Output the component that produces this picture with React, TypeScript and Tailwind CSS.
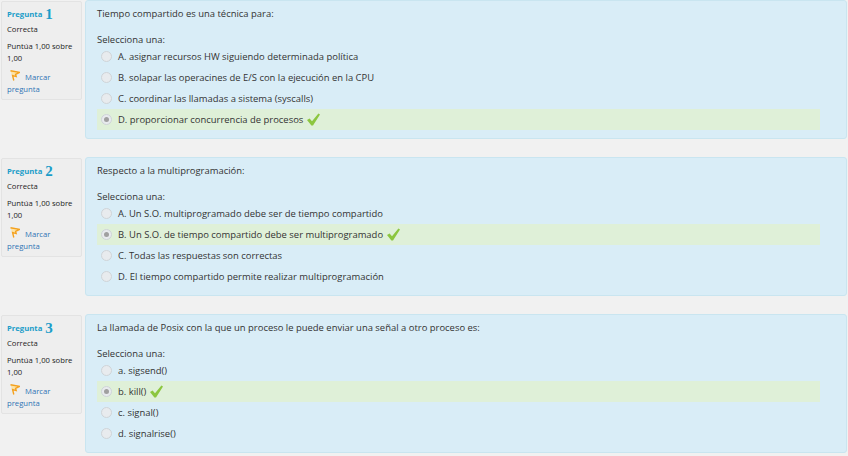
const questions = [
  {
    num: 1,
    text: "Tiempo compartido es una técnica para:",
    answer: 3,
    options: [
      "A. asignar recursos HW siguiendo determinada política",
      "B. solapar las operacines de E/S con la ejecución en la CPU",
      "C. coordinar las llamadas a sistema (syscalls)",
      "D. proporcionar concurrencia de procesos",
    ],
  },
  {
    num: 2,
    text: "Respecto a la multiprogramación:",
    answer: 1,
    options: [
      "A. Un S.O. multiprogramado debe ser de tiempo compartido",
      "B. Un S.O. de tiempo compartido debe ser multiprogramado",
      "C. Todas las respuestas son correctas",
      "D. El tiempo compartido permite realizar multiprogramación",
    ],
  },
  {
    num: 3,
    text: "La llamada de Posix con la que un proceso le puede enviar una señal a otro proceso es:",
    answer: 1,
    options: ["a. sigsend()", "b. kill()", "c. signal()", "d. signalrise()"],
  },
];

const Flag = () => (
  <svg width="10" height="11" viewBox="0 0 10 11" className="mr-[5px] inline-block align-[-1px]">
    <path d="M0.5 0.8 L9.5 2.4 L5.6 4.4 L6.2 6.6 L2.6 5.6 L3.8 10.5" fill="#fce3a6" stroke="#f4a11e" strokeWidth="1.4" />
  </svg>
);

const Check = () => (
  <svg width="13" height="13" viewBox="0 0 13 13" className="ml-[4px] shrink-0">
    <path d="M0 7 L2.6 5.4 L5 8.2 L11.4 0.4 L13 1.4 L6 12.6 L4.4 12.6 Z" fill="#8cc63f" />
  </svg>
);

const Radio = ({ checked }: { checked: boolean }) => (
  <span className="flex h-[11px] w-[11px] shrink-0 items-center justify-center rounded-full border border-[#cfd4d8] bg-[#e8ebee]">
    {checked && <span className="h-[5px] w-[5px] rounded-full bg-[#a0a0a0]" />}
  </span>
);

const Question = ({ q }: { q: (typeof questions)[number] }) => (
  <div className="flex items-start">
    <div className="ml-px mt-px h-[99px] w-[81px] shrink-0 rounded-[2px] border border-[#e3e3e3] bg-[#eeeeee] pl-[5px] pt-[4px] text-[7.7px] text-[#222]">
      <div className="flex h-[18px] items-center gap-[3px] font-bold text-[#1b9dc9]">
        Pregunta <span className="-mt-px font-['Liberation_Serif',serif] text-[15px]">{q.num}</span>
      </div>
      <div className="-mt-px leading-[12px]">Correcta</div>
      <div className="mt-[5px] leading-[12px]">Puntúa 1,00 sobre 1,00</div>
      <div className="mt-[6px] pl-[3px] leading-[12px] text-[#2f74b5]">
        <Flag />
        Marcar
      </div>
      <div className="leading-[12px] text-[#2f74b5]">pregunta</div>
    </div>
    <div className="ml-[3px] flex h-[139px] w-[762px] flex-col rounded-[3px] border border-[#c9e5f0] bg-[#d9edf7] pl-[11px] pt-[6px] text-[9.45px] text-[#333]">
      <div className="h-[14px] leading-[14px]">{q.text}</div>
      <div className="mt-[12px] h-[14px] leading-[14px]">Selecciona una:</div>
      <div className="-mt-px flex flex-col">
        {q.options.map((opt, i) => (
          <div
            key={opt}
            className={`flex h-[21px] w-[723px] items-center pl-[4px] ${i === q.answer ? "bg-[#dff0d8]" : ""}`}
          >
            <Radio checked={i === q.answer} />
            <span className="ml-[6px] mt-[2px]">{opt}</span>
            {i === q.answer && <Check />}
          </div>
        ))}
      </div>
    </div>
  </div>
);

export default function App() {
  return (
    <div className="flex h-[456px] w-[848px] flex-col gap-[18px] overflow-hidden bg-[#f1f1f1] font-['Open_Sans',sans-serif]">
      {questions.map((q) => (
        <Question key={q.num} q={q} />
      ))}
    </div>
  );
}
